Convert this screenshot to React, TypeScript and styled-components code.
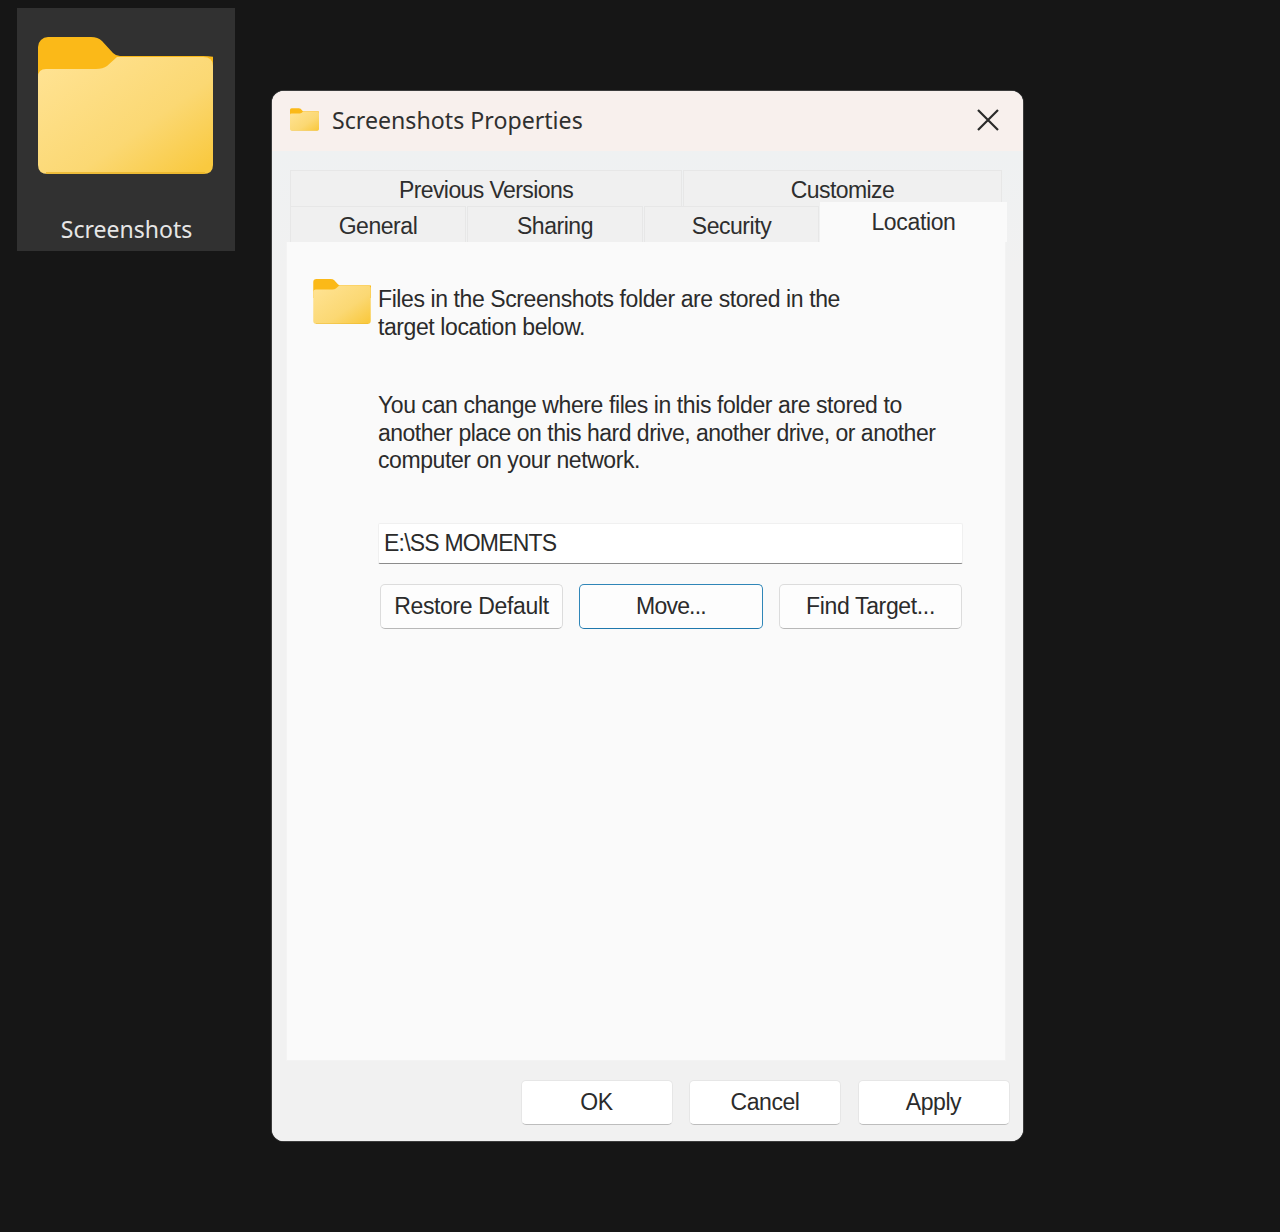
import React from "react";
import styled, { createGlobalStyle } from "styled-components";

const Global = createGlobalStyle`
  html, body { margin: 0; padding: 0; background: #161616; }
  #root { width: 1280px; height: 1232px; overflow: hidden; }
`;

const Desktop = styled.div`
  width: 1280px;
  height: 1232px;
  box-sizing: border-box;
  background: #161616;
  padding: 8px 0 0 17px;
  display: flex;
  align-items: flex-start;
  gap: 37px;
  font-family: "Liberation Sans", Arial, sans-serif;
`;

const DesktopItem = styled.div`
  width: 218px;
  height: 243px;
  flex: none;
  background: #313131;
  display: flex;
  flex-direction: column;
  align-items: center;
  padding: 29px 2px 0 0;
  box-sizing: border-box;
`;

const DesktopLabel = styled.div`
  margin: 40px 0 0 3px;
  font-family: "Noto Sans", sans-serif;
  font-size: 24px;
  line-height: 30px;
  color: #e6e6e6;
  transform: scaleX(0.96);
`;

const Dialog = styled.div`
  width: 751px;
  height: 1050px;
  flex: none;
  margin-top: 83px;
  box-sizing: border-box;
  border-radius: 12px;
  background: #f1f1f1;
  box-shadow: inset 0 0 0 1.5px #fafafa, 0 0 0 1px #3c3c3c;
  display: flex;
  flex-direction: column;
  overflow: hidden;
`;

const TitleBar = styled.div`
  height: 60px;
  flex: none;
  box-sizing: border-box;
  background: #f8f0ed;
  display: flex;
  align-items: center;
  padding: 0 23px 3px 18px;
  gap: 13px;
`;

const TitleText = styled.div`
  flex: 1;
  font-family: "Noto Sans", sans-serif;
  font-size: 24px;
  line-height: 30px;
  color: #303030;
  transform: scaleX(0.965);
  transform-origin: left center;
`;

const CloseButton = styled.div`
  width: 24px;
  height: 24px;
  display: flex;
  align-items: center;
  justify-content: center;
  color: #2a2a2a;
`;

const Body = styled.div`
  flex: 1;
  display: flex;
  flex-direction: column;
  padding: 19px 16px 0 14px;
  background: linear-gradient(#eff1f2, #f1f1f1 120px);
  min-height: 0;
`;

const TabRow = styled.div<{ $top?: boolean }>`
  display: flex;
  height: 36px;
  flex: none;
  margin-left: 4px;
  margin-right: ${(p) => (p.$top ? "4px" : "0")};
  letter-spacing: ${(p) => (p.$top ? "-0.58px" : "-0.45px")};
`;

const Tab = styled.div<{ $w?: number; $grow?: boolean }>`
  width: ${(p) => (p.$w ? `${p.$w}px` : "auto")};
  flex: ${(p) => (p.$grow ? 1 : "none")};
  box-sizing: border-box;
  height: 36px;
  border: 1px solid #e7e7e7;
  border-bottom: none;
  margin-right: 1px;
  background: #f0f0f0;
  display: flex;
  align-items: center;
  justify-content: center;
  font-size: 23px;
  color: #2e2e2e;
  padding-top: 4px;
`;

const ActiveTab = styled.div`
  flex: 1;
  height: 40px;
  margin-top: -4px;
  background: #fafafa;
  position: relative;
  z-index: 1;
  display: flex;
  align-items: center;
  justify-content: center;
  font-size: 23px;
  letter-spacing: -0.35px;
  color: #2e2e2e;
  box-sizing: border-box;
`;

const Panel = styled.div`
  width: 720px;
  height: 819px;
  flex: none;
  box-sizing: border-box;
  background: #fafafa;
  border: 1px solid #f3f3f3;
  border-top: none;
  padding: 37px 43px 0 26px;
`;

const InfoRow = styled.div`
  display: flex;
  align-items: flex-start;
  gap: 7px;
`;

const Paragraph = styled.p`
  margin: 0;
  font-size: 23px;
  line-height: 27.5px;
  letter-spacing: -0.41px;
  color: #2b2b2b;
`;

const InfoText = styled(Paragraph)`
  padding-top: 7px;
`;

const Indented = styled.div`
  margin-left: 65px;
`;

const Section = styled(Paragraph)`
  margin-top: 51px;
`;

const TightLine = styled.span`
  letter-spacing: -0.5px;
`;

const PathField = styled.div`
  margin-top: 48px;
  width: 585px;
  height: 41px;
  box-sizing: border-box;
  background: #ffffff;
  border-bottom: 1.5px solid #8c8c8c;
  border-top: 1px solid #f0f0f0;
  border-left: 1px solid #f0f0f0;
  border-right: 1px solid #f0f0f0;
  border-radius: 2px;
  display: flex;
  align-items: center;
  padding-left: 5px;
  font-size: 23px;
  letter-spacing: -0.8px;
  color: #2b2b2b;
`;

const ButtonRow = styled.div`
  margin-top: 20px;
  display: flex;
  gap: 16px;
  margin-left: 2px;
`;

const Button = styled.div<{ $focus?: boolean }>`
  width: ${(p) => (p.$focus ? "184px" : "183px")};
  height: 45px;
  box-sizing: border-box;
  background: #fdfdfd;
  border: 1px solid ${(p) => (p.$focus ? "#2f86b8" : "#dcdcdc")};
  border-bottom-color: ${(p) => (p.$focus ? "#1f78ad" : "#b8b8b8")};
  border-radius: 5px;
  display: flex;
  align-items: center;
  justify-content: center;
  font-size: 23px;
  letter-spacing: ${(p) => (p.$focus ? "-0.8px" : "-0.35px")};
  color: #2b2b2b;
`;

const Footer = styled.div`
  flex: 1;
  display: flex;
  justify-content: flex-end;
  align-items: flex-start;
  gap: 16.5px;
  padding: 19px 0 0 0;
  margin-right: -2.5px;
`;

const FooterButton = styled(Button)`
  width: 152px;
  background: #ffffff;
  border-color: #e6e6e6;
  border-bottom-color: #bdbdbd;
  letter-spacing: -0.45px;
`;

function Folder({ w, h }: { w: number; h: number }) {
  const id = `f${w}`;
  return (
    <svg width={w} height={h} viewBox="0 0 175 137" style={{ display: "block", flex: "none" }}>
      <defs>
        <linearGradient id={id} x1="0.05" y1="0.1" x2="0.95" y2="0.95">
          <stop offset="0" stopColor="#ffe291" />
          <stop offset="0.6" stopColor="#fbd873" />
          <stop offset="1" stopColor="#f9c93f" />
        </linearGradient>
      </defs>
      <path
        d="M0 10a10 10 0 0 1 10-10h43q7 0 11 4l11 12q3 3 7 3h83q20 0 20 9v30H0z"
        fill="#fbb918"
      />
      <path
        d="M0 40q0-8 8-8h50q7 0 11-3l10-9h86q10 0 10 9v99q0 9-10 9H10q-10 0-10-9z"
        fill={`url(#${id})`}
      />
      <path d="M8 136h159" stroke="#e8b328" strokeWidth="1.5" fill="none" />
    </svg>
  );
}

function CloseIcon() {
  return (
    <svg width="22" height="22" viewBox="0 0 22 22">
      <path d="M1 1l20 20M21 1L1 21" stroke="currentColor" strokeWidth="2.2" fill="none" />
    </svg>
  );
}

export default function App() {
  return (
    <>
      <Global />
      <Desktop>
        <DesktopItem>
          <Folder w={175} h={137} />
          <DesktopLabel>Screenshots</DesktopLabel>
        </DesktopItem>
        <Dialog>
          <TitleBar>
            <Folder w={29} h={23} />
            <TitleText>Screenshots Properties</TitleText>
            <CloseButton>
              <CloseIcon />
            </CloseButton>
          </TitleBar>
          <Body>
            <TabRow $top>
              <Tab $w={392}>Previous Versions</Tab>
              <Tab $grow>Customize</Tab>
            </TabRow>
            <TabRow>
              <Tab $w={176}>General</Tab>
              <Tab $w={176}>Sharing</Tab>
              <Tab $w={175}>Security</Tab>
              <ActiveTab>Location</ActiveTab>
            </TabRow>
            <Panel>
              <InfoRow>
                <Folder w={58} h={45} />
                <InfoText>
                  Files in the Screenshots folder are stored in the
                  <br />
                  target location below.
                </InfoText>
              </InfoRow>
              <Indented>
                <Section>
                  You can change where files in this folder are stored to
                  <br />
                  <TightLine>another place on this hard drive, another drive, or another</TightLine>
                  <br />
                  computer on your network.
                </Section>
                <PathField>E:\SS MOMENTS</PathField>
                <ButtonRow>
                  <Button>Restore Default</Button>
                  <Button $focus>Move...</Button>
                  <Button>Find Target...</Button>
                </ButtonRow>
              </Indented>
            </Panel>
            <Footer>
              <FooterButton>OK</FooterButton>
              <FooterButton>Cancel</FooterButton>
              <FooterButton>Apply</FooterButton>
            </Footer>
          </Body>
        </Dialog>
      </Desktop>
    </>
  );
}
